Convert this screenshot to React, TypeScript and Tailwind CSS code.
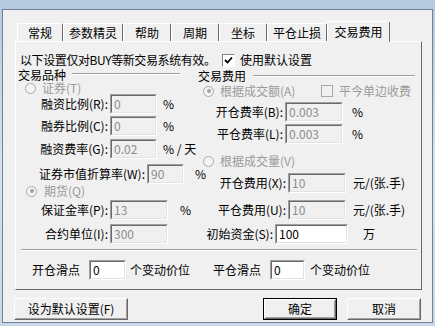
import React from "react";

const Field = ({ value, w, disabled }: { value: string; w: string; disabled?: boolean }) => (
  <div className={`${w} h-[20px] shrink-0 border border-t-[#a0a0a0] border-l-[#a0a0a0] border-r-white border-b-white`}>
    <div
      className={`h-full w-full border border-t-[#696969] border-l-[#696969] border-r-[#e3e3e3] border-b-[#e3e3e3] pl-[2px] flex items-center text-[12px] leading-[14px] ${
        disabled ? "bg-[#f0f0f0] text-[#8d8d8d]" : "bg-white text-black"
      }`}
    >
      {value}
    </div>
  </div>
);

const Radio = ({ checked }: { checked?: boolean }) => (
  <div className="w-[11px] h-[11px] shrink-0 rounded-full border border-[#a8a8a8] bg-[#f4f4f4] flex items-center justify-center">
    {checked && <div className="w-[4px] h-[4px] rounded-full bg-[#a0a0a0]" />}
  </div>
);

const Etched = ({ className }: { className?: string }) => (
  <div className={`h-[2px] border-t border-t-[#a0a0a0] border-b border-b-white ${className ?? ""}`} />
);

const Button = ({ label, w, isDefault }: { label: string; w: string; isDefault?: boolean }) => (
  <div className={`${w} h-[22px] ${isDefault ? "border border-black" : ""}`}>
    <div className="h-full w-full border border-t-white border-l-white border-r-[#696969] border-b-[#696969]">
      <div className="h-full w-full border border-t-[#f0f0f0] border-l-[#f0f0f0] border-r-[#a0a0a0] border-b-[#a0a0a0] flex items-center justify-center text-[12px]">
        {label}
      </div>
    </div>
  </div>
);

const tabs = [
  { name: "常规", w: "w-[46px]" },
  { name: "参数精灵", w: "w-[60px]" },
  { name: "帮助", w: "w-[48px]" },
  { name: "周期", w: "w-[48px]" },
  { name: "坐标", w: "w-[48px]" },
  { name: "平仓止损", w: "w-[60px]" },
];

export default function App() {
  return (
    <div className="w-[435px] h-[326px] bg-[#c9d8e9] bg-gradient-to-b from-[#b6c9de] via-[#d6e1ed] to-[#c9d8e9] pt-[9px] pl-[2px] pr-[2px] pb-[3px] font-['Noto_Sans_CJK_SC','Noto_Sans_CJK_JP',sans-serif] text-[12px] leading-[14px] text-black overflow-hidden">
      <div className="h-full w-full border border-[#6f8299] bg-[#f0f0f0] pt-[10px] pl-[12px] flex flex-col">
        {/* tabs */}
        <div className="flex items-end h-[21px] pl-[2px]">
          {tabs.map((t) => (
            <div
              key={t.name}
              className={`${t.w} h-[18px] shrink-0 rounded-t-[2px] border-t border-l border-t-white border-l-white border-r border-r-[#696969] flex items-center justify-center pt-[1px]`}
            >
              {t.name}
            </div>
          ))}
          <div className="w-[63px] h-[21px] -mb-px relative z-10 shrink-0 rounded-t-[2px] bg-[#f0f0f0] border-t border-l border-t-white border-l-white border-r border-r-[#696969] flex items-center justify-center pb-[1px]">
            交易费用
          </div>
        </div>

        {/* panel */}
        <div className="w-[407px] h-[249px] border-t border-l border-t-white border-l-white border-r border-b border-r-[#696969] border-b-[#696969] flex flex-col">
          <div className="mt-[11px] h-[14px] flex items-center pl-[4px] whitespace-nowrap leading-[12px]">
            <span className="w-[202px] shrink-0 tracking-[-0.4px]">以下设置仅对BUY等新交易系统有效。</span>
            <div className="w-[13px] h-[13px] shrink-0 border border-t-[#808080] border-l-[#808080] border-r-white border-b-white bg-white flex items-center justify-center">
              <svg width="9" height="9" viewBox="0 0 9 9">
                <path d="M1 4 L3.5 6.5 L8 1.5" stroke="#000" strokeWidth="1.8" fill="none" />
              </svg>
            </div>
            <span className="ml-[5px]">使用默认设置</span>
          </div>

          <div className="mt-[1px] flex">
            {/* left column */}
            <div className="w-[180px] shrink-0 flex flex-col pl-[2px] whitespace-nowrap">
              <div className="h-[14px] flex items-center leading-[12px]">
                <span>交易品种</span>
                <Etched className="flex-1 ml-[6px] mr-[16px] mt-[-2px]" />
              </div>
              <div className="h-[12px] flex items-center pl-[7px] gap-[6px] text-[#9a9a9a] leading-[12px]">
                <Radio />
                <span>证券(T)</span>
              </div>
              <div className="h-[20px] flex items-center">
                <span className="w-[90px] text-right shrink-0">融资比例(R):</span>
                <div className="ml-[2px]"><Field value="0" w="w-[47px]" disabled /></div>
                <span className="ml-[6px]">%</span>
              </div>
              <div className="mt-[2px] h-[20px] flex items-center">
                <span className="w-[90px] text-right shrink-0">融券比例(C):</span>
                <div className="ml-[2px]"><Field value="0" w="w-[47px]" disabled /></div>
                <span className="ml-[6px]">%</span>
              </div>
              <div className="mt-[3px] h-[20px] flex items-center">
                <span className="w-[90px] text-right shrink-0">融资费率(G):</span>
                <div className="ml-[2px]"><Field value="0.02" w="w-[47px]" disabled /></div>
                <span className="ml-[6px]">% / 天</span>
              </div>
              <div className="mt-[5px] h-[20px] flex items-center">
                <span className="w-[127px] text-right shrink-0">证券市值折算率(W):</span>
                <div className="ml-[2px]"><Field value="90" w="w-[37px]" disabled /></div>
                <span className="ml-[11px]">%</span>
              </div>
              <div className="mt-[1px] h-[12px] flex items-center pl-[8px] gap-[7px] text-[#9a9a9a] leading-[12px]">
                <Radio checked />
                <span>期货(Q)</span>
              </div>
              <div className="mt-[3px] h-[20px] flex items-center">
                <span className="w-[90px] text-right shrink-0">保证金率(P):</span>
                <div className="ml-[2px]"><Field value="13" w="w-[58px]" disabled /></div>
                <span className="ml-[12px]">%</span>
              </div>
              <div className="mt-[4px] h-[20px] flex items-center">
                <span className="w-[90px] text-right shrink-0">合约单位(I):</span>
                <div className="ml-[2px]"><Field value="300" w="w-[58px]" disabled /></div>
              </div>
            </div>

            {/* right column */}
            <div className="flex-1 flex flex-col pl-[2px] whitespace-nowrap">
              <div className="h-[16px] flex items-center">
                <span>交易费用</span>
                <Etched className="flex-1 ml-[7px] mr-[6px]" />
              </div>
              <div className="h-[14px] flex items-center pl-[5px] text-[#9a9a9a]">
                <div className="w-[118px] shrink-0 flex items-center gap-[6px]">
                  <Radio checked />
                  <span>根据成交额(A)</span>
                </div>
                <div className="w-[12px] h-[12px] shrink-0 border border-[#a8a8a8] bg-[#f0f0f0]" />
                <span className="ml-[6px]">平今单边收费</span>
              </div>
              <div className="mt-[4px] h-[20px] flex items-center">
                <span className="w-[85px] text-right shrink-0">开仓费率(B):</span>
                <div className="ml-[2px]"><Field value="0.003" w="w-[58px]" disabled /></div>
                <span className="ml-[9px]">%</span>
              </div>
              <div className="mt-[2px] h-[20px] flex items-center">
                <span className="w-[85px] text-right shrink-0">平仓费率(L):</span>
                <div className="ml-[2px]"><Field value="0.003" w="w-[58px]" disabled /></div>
                <span className="ml-[9px]">%</span>
              </div>
              <div className="mt-[10px] h-[14px] flex items-center pl-[5px] gap-[6px] text-[#9a9a9a]">
                <Radio />
                <span>根据成交量(V)</span>
              </div>
              <div className="mt-[5px] h-[20px] flex items-center">
                <span className="w-[88px] text-right shrink-0">开仓费用(X):</span>
                <div className="ml-[2px]"><Field value="10" w="w-[58px]" disabled /></div>
                <span className="ml-[7px]">元/(张.手)</span>
              </div>
              <div className="mt-[7px] h-[20px] flex items-center">
                <span className="w-[88px] text-right shrink-0">平仓费用(U):</span>
                <div className="ml-[2px]"><Field value="10" w="w-[58px]" disabled /></div>
                <span className="ml-[7px]">元/(张.手)</span>
              </div>
              <div className="mt-[4px] h-[20px] flex items-center">
                <span className="w-[75px] text-right shrink-0">初始资金(S):</span>
                <div className="ml-[2px]"><Field value="100" w="w-[73px]" /></div>
                <span className="ml-[15px]">万</span>
              </div>
            </div>
          </div>

          <Etched className="mt-[5px] ml-[5px] mr-[4px]" />

          <div className="mt-[9px] h-[20px] flex items-center pl-[16px] whitespace-nowrap">
            <span className="w-[48px] shrink-0">开仓滑点</span>
            <div className="ml-[9px]"><Field value="0" w="w-[37px]" /></div>
            <span className="ml-[4px] w-[60px] shrink-0">个变动价位</span>
            <span className="ml-[23px] w-[48px] shrink-0">平仓滑点</span>
            <div className="ml-[9px]"><Field value="0" w="w-[35px]" /></div>
            <span className="ml-[5px]">个变动价位</span>
          </div>
        </div>

        {/* buttons */}
        <div className="mt-[8px] flex items-center -ml-px">
          <Button label="设为默认设置(F)" w="w-[114px]" />
          <div className="ml-[135px]">
            <Button label="确定" w="w-[74px]" isDefault />
          </div>
          <div className="ml-[10px]">
            <Button label="取消" w="w-[74px]" />
          </div>
        </div>
      </div>
    </div>
  );
}
